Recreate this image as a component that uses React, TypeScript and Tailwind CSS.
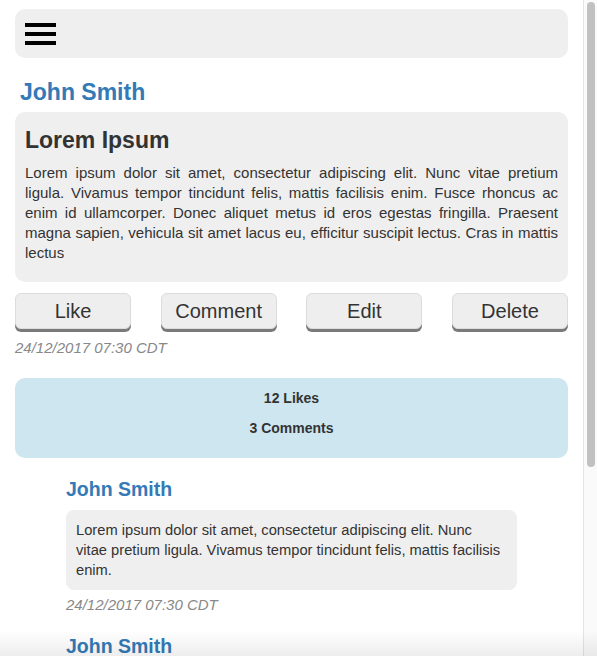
const post = {
  author: "John Smith",
  title: "Lorem Ipsum",
  body: "Lorem ipsum dolor sit amet, consectetur adipiscing elit. Nunc vitae pretium ligula. Vivamus tempor tincidunt felis, mattis facilisis enim. Fusce rhoncus ac enim id ullamcorper. Donec aliquet metus id eros egestas fringilla. Praesent magna sapien, vehicula sit amet lacus eu, efficitur suscipit lectus. Cras in mattis lectus",
  date: "24/12/2017 07:30 CDT",
  likes: 12,
};

const comments = [
  {
    author: "John Smith",
    text: "Lorem ipsum dolor sit amet, consectetur adipiscing elit. Nunc vitae pretium ligula. Vivamus tempor tincidunt felis, mattis facilisis enim.",
    date: "24/12/2017 07:30 CDT",
  },
  {
    author: "John Smith",
    text: "Lorem ipsum dolor sit amet, consectetur adipiscing elit.",
    date: "24/12/2017 07:30 CDT",
  },
];

const actions = ["Like", "Comment", "Edit", "Delete"];

const Navbar = () => (
  <nav className="h-[49px] rounded-[10px] bg-[#efefef] flex items-center pl-[10px]">
    <button className="flex flex-col gap-[5px] w-[31px]" aria-label="Menu">
      <span className="block h-[4px] bg-black" />
      <span className="block h-[4px] bg-black" />
      <span className="block h-[4px] bg-black" />
    </button>
  </nav>
);

const Comment = ({ c }: { c: (typeof comments)[number] }) => (
  <div className="mt-[20px]">
    <h4 className="text-[19.5px] leading-[22px] font-bold text-[#337ab7]">{c.author}</h4>
    <div className="mt-[10px] rounded-[8px] bg-[#efefef] px-[10px] py-[10px] text-[14.7px] leading-[20px]">
      {c.text}
    </div>
    <p className="mt-[5px] text-[15px] leading-[20px] italic text-[#888]">{c.date}</p>
  </div>
);

export default function App() {
  return (
    <div className="relative h-[656px] flex overflow-hidden bg-white text-[#333] font-['Liberation_Sans',Arial,sans-serif]">
      <main className="flex-1 min-w-0 px-[15px] pt-[9px]">
        <Navbar />

        <h3 className="mt-[21px] mb-[7px] pl-[5px] text-[23px] leading-[26px] font-bold text-[#337ab7]">
          {post.author}
        </h3>

        {/* Post card */}
        <article className="rounded-[10px] bg-[#efefef] px-[10px] pt-[15px] pb-[19px]">
          <h2 className="text-[23px] leading-[26px] font-bold mb-[10px]">{post.title}</h2>
          <p className="text-[15px] leading-[20px] text-justify">{post.body}</p>
        </article>

        <div className="mt-[11px] flex justify-between">
          {actions.map((a) => (
            <button
              key={a}
              className="w-[116px] h-[36px] rounded-[6px] bg-[#eeeeee] border border-[#dcdcdc] shadow-[0_3px_0_#7a7a7a] text-[20px] leading-[20px] text-[#333]"
            >
              {a}
            </button>
          ))}
        </div>
        <p className="mt-[9px] text-[15px] leading-[20px] italic text-[#888]">{post.date}</p>

        {/* Stats */}
        <div className="mt-[20px] rounded-[10px] bg-[#cde6f0] pt-[10px] pb-[10px] text-center text-[14px] leading-[20px] font-bold">
          <p className="mb-[10px]">{post.likes} Likes</p>
          <p className="mb-[10px]">{comments.length + 1} Comments</p>
        </div>

        <section className="px-[51px]">
          {comments.map((c, i) => (
            <Comment key={i} c={c} />
          ))}
        </section>
      </main>

      {/* scrollbar */}
      <div className="w-[14px] shrink-0 border-l border-[#e4e4e4] bg-[#fafafa] pt-[2px] pl-[3px]">
        <div className="w-[8px] h-[465px] rounded-full bg-[#c1c1c1]" />
      </div>

      <div className="pointer-events-none absolute left-0 right-0 bottom-0 h-[26px] bg-gradient-to-b from-white/0 to-black/[0.07]" />
    </div>
  );
}
